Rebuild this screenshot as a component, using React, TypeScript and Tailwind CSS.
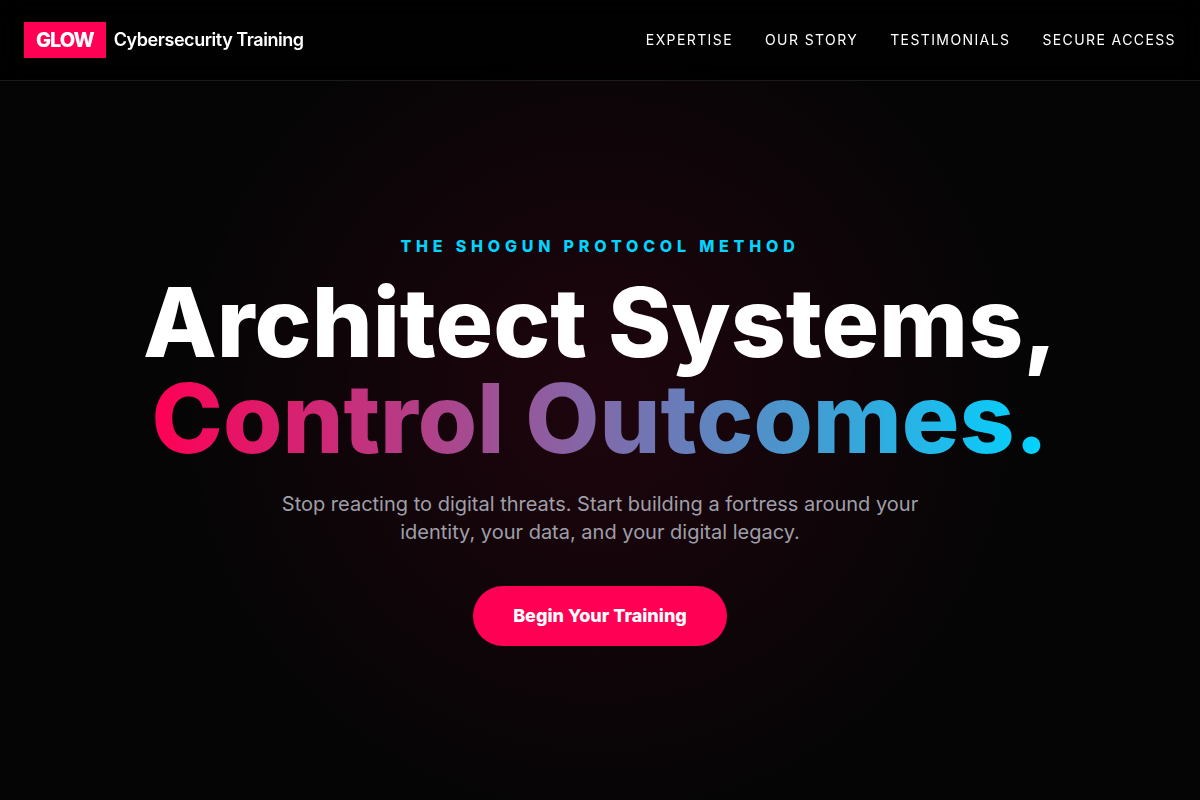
const navLinks = [
  { label: 'Expertise', href: '#expertise' },
  { label: 'Our Story', href: '#story' },
  { label: 'Testimonials', href: '#testimonials' },
  { label: 'Secure Access', href: '#access' },
];

const Header = () => {
  return (
    <header className="fixed inset-x-0 top-0 z-50 border-b border-white/10 bg-black/80 backdrop-blur-md">
      <div className="flex h-20 items-center justify-between px-6">
        <a href="#top" className="flex items-center gap-2">
          <span className="bg-[#ff0055] px-3 py-1 text-xl font-extrabold tracking-tighter">
            GLOW
          </span>
          <span className="text-lg font-semibold tracking-tight">
            Cybersecurity Training
          </span>
        </a>

        <nav className="flex gap-8">
          {navLinks.map(({ label, href }) => (
            <a
              key={href}
              href={href}
              className="text-sm tracking-widest uppercase"
            >
              {label}
            </a>
          ))}
        </nav>
      </div>
    </header>
  );
};

const Hero = () => {
  return (
    <section className="flex min-h-screen flex-col items-center justify-center bg-[radial-gradient(circle_at_center,rgba(255,0,85,0.1)_0%,transparent_60%)] px-6 pt-20 text-center">
      <p className="mb-4 font-extrabold tracking-[0.3em] text-[#00d4ff] uppercase">
        The Shogun Protocol Method
      </p>

      <h1 className="mb-6 text-8xl leading-none font-extrabold">
        Architect Systems,
        <br />
        <span className="bg-linear-to-r/srgb from-[#ff0055] to-[#00d4ff] bg-clip-text text-transparent">
          Control Outcomes.
        </span>
      </h1>

      <p className="mb-10 max-w-2xl text-xl text-zinc-400">
        Stop reacting to digital threats. Start building a fortress around your
        identity, your data, and your digital legacy.
      </p>

      <button
        type="button"
        className="rounded-full bg-[#ff0055] px-10 py-4 text-lg font-extrabold"
      >
        Begin Your Training
      </button>
    </section>
  );
};

const App = () => {
  return (
    <div
      id="top"
      className="min-h-screen bg-[#050505] font-['Inter',sans-serif] text-white"
    >
      <Header />
      <Hero />
    </div>
  );
};

export default App;
